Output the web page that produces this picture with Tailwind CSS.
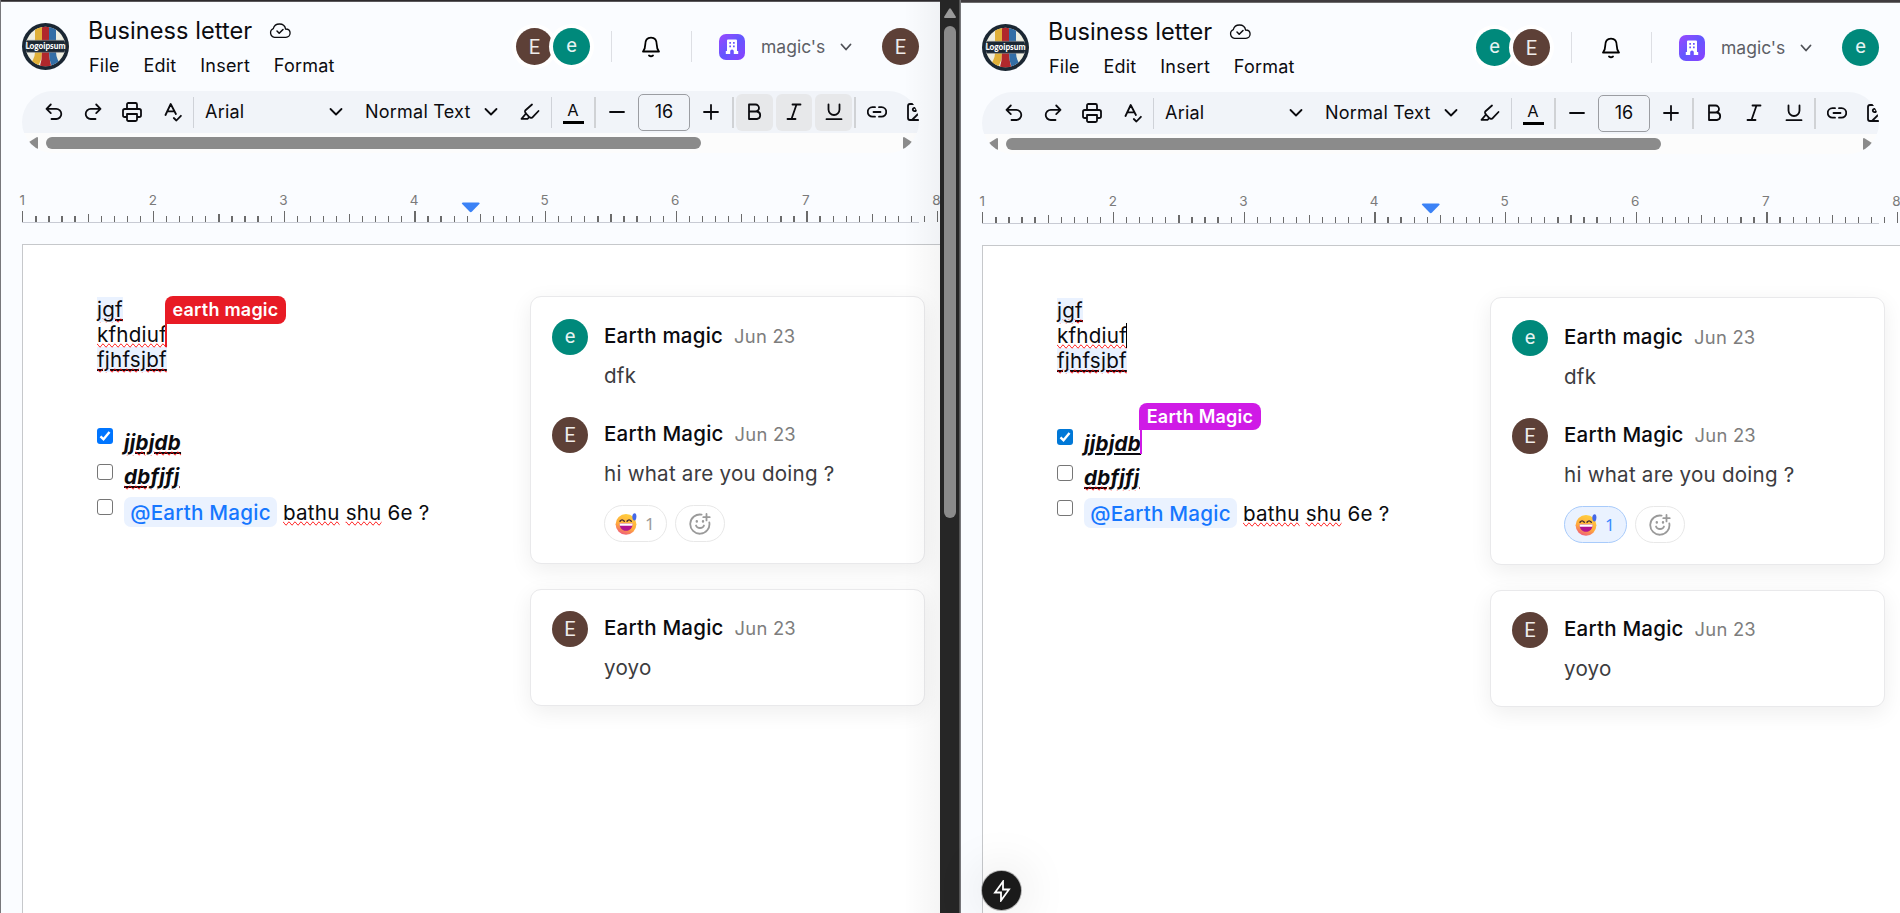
<!DOCTYPE html>
<html lang="en">
<head>
<meta charset="utf-8">
<title>Business letter</title>
<script src="https://cdn.jsdelivr.net/npm/@tailwindcss/browser@4"></script>
</head>
<body class="w-[1900px] h-[913px] overflow-hidden bg-[#fafcff] font-['Inter','Liberation_Sans',sans-serif] tracking-[0.014em] text-[#0b0b0f]">
<div id="app" class="relative flex h-[913px] w-[1900px]"></div>
<script>
const svg = (w, h, vb, inner, cls) => `<svg width="${w}" height="${h}" viewBox="${vb}" fill="none" stroke="currentColor" stroke-width="1.8" stroke-linecap="round" stroke-linejoin="round" class="shrink-0 ${cls || ''}">${inner}</svg>`;
const avatar = (c, cls) => `<div class="flex shrink-0 items-center justify-center rounded-full tracking-normal text-white ${c === 'e' ? 'bg-[#00897b]' : 'bg-[#5d4037]'} ${cls}"><span class="font-['Roboto'] text-[20px] leading-none opacity-90 ${c === 'e' ? '-mt-[3px]' : ''}">${c}</span></div>`;
const chevron = svg(14, 14, '0 0 14 14', '<path d="M1.5 4 7 9.5 12.5 4"/>');

const logo = `<svg width="47" height="47" viewBox="0 0 47 47" class="shrink-0 tracking-normal">
<defs><clipPath id="disc"><circle cx="23.5" cy="23.5" r="19.8"/></clipPath></defs>
<circle cx="23.5" cy="23.5" r="23.5" fill="#1b2733"/>
<g clip-path="url(#disc)"><rect width="47" height="47" fill="#efeee0"/>
<path fill="#e0b038" d="M13 0h7v18h-7zM13 29h7q0 9-5 15H5Q13 37 13 29z"/>
<path fill="#b0282c" d="M20 0h7v18h-7zM20 29h7q.5 9 3 17H17Q20 38 20 29z"/>
<path fill="#336ea6" d="M27 0h7v18h-7zM27 29h7q0 8 7 15H30Q27 37 27 29z"/>
<rect y="17.3" width="47" height="12" fill="#1b2733"/></g>
<path d="M4 17.3h39M4 29.3h39" stroke="#8f9294" stroke-width=".6"/>
<text x="3.4" y="26.200" textLength="40" lengthAdjust="spacingAndGlyphs" font-family="Lato" font-weight="900" font-size="8.4" fill="#fff">Logoipsum</text></svg>`;

const building = `<div class="flex size-[26px] items-center justify-center rounded-[7px] bg-linear-to-br from-[#9a45ff] via-[#6257ff] to-[#8b3dff]"><svg width="14" height="16" viewBox="0 0 14 16"><path fill="#fff" fill-rule="evenodd" d="M3 .5h8a1 1 0 0 1 1 1V12h1.2v3H8.8v-2.8a1.8 1.8 0 0 0-3.6 0V15H.8v-3H2V1.500a1 1 0 0 1 1-1zM4.300 3v1.700H6V3zM8 3v1.700h1.700V3zM4.300 6.500v1.700H6V6.500zM8 6.500v1.700h1.700V6.500z"/></svg></div>`;

const emoji = `<svg width="23" height="23" viewBox="0 0 23 23" class="shrink-0"><defs><linearGradient id="face" x1=".7" y1="0" x2=".3" y2="1"><stop offset="0" stop-color="#ffd13f"/><stop offset=".6" stop-color="#ffaa3c"/><stop offset="1" stop-color="#f0587c"/></linearGradient></defs>
<circle cx="11" cy="12.300" r="10.400" fill="url(#face)"/>
<path d="M5 9.200q2-2.600 4.300 0M12 9.200q2-2.600 4.300 0" fill="none" stroke="#402a32" stroke-width="1.400" stroke-linecap="round"/>
<path d="M4.500 11.500h13.200c0 4-2.500 7.300-6.600 7.300s-6.600-3.300-6.600-7.300z" fill="#b1148f"/><path d="M4.500 11.500h13.200l-.3 2.300H4.800z" fill="#fff"/>
<path d="M17.300 4.800c0-2 1-3.500 2.400-3.500 1.200 0 1.700 1.200 1.700 3.500s-.8 3.700-2 3.700-2.100-1.300-2.100-3.700z" fill="#4468e8"/></svg>`;

const addReaction = svg(22, 22, '0 0 22 22', '<path d="M12.600 1.700A9.600 9.600 0 1 0 20.300 9.400M17.500 1v6.400M14.300 4.200h6.400"/><path d="M7 12.500q.8 2.500 4 2.500t4-2.500"/><path d="M7.800 8.200v.4M14 8.200v.4" stroke-width="2.400"/>', 'text-[#9a9a9a]');

function ruler() {
  let s = '';
  for (let i = 0; i <= 70; i++) {
    const h = i % 10 === 0 ? 11 : i % 5 === 0 ? 8 : 6;
    s += `<rect x="${(21.2 + i * 13.07).toFixed(2)}" y="${25 - h}" width="1.25" height="${h}" fill="#6b6b6b"/>`;
  }
  for (let n = 0; n < 8; n++) s += `<text x="${(21.2 + n * 130.6).toFixed(1)}" y="7.800" text-anchor="middle" font-size="13.500" fill="#7a7a7a">${n + 1}</text>`;
  return `<svg width="939" height="37" viewBox="0 -10 939 37" class="block shrink-0 overflow-visible tracking-normal"><path d="M21 25h897v1H21z" fill="#c8cbd4"/><g shape-rendering="crispEdges">${s}</g><path d="M462 5.500h15.500q2 0 .8 1.500l-7.300 7.600q-1.200 1.200-2.500 0L461.200 7q-1.200-1.500.8-1.500z" fill="#3b82f6"/></svg>`;
}

const comment = (c, name, text, h) => `<div class="flex ${h}">
  ${avatar(c, 'size-[36px]')}
  <div class="ml-[16px] pt-[4px]">
    <div class="flex h-[26px] items-baseline whitespace-nowrap"><span class="text-[20.500px]/[26px] font-medium">${name}</span><span class="ml-[11px] text-[18.400px]/[26px] text-[#7d7d7d]">Jun 23</span></div>
    <div class="mt-[14px] text-[20.600px]/[26px] whitespace-nowrap text-[#3c3c40]">${text}</div>
  </div></div>`;

const checkbox = (on) => on
  ? `<svg width="16" height="16" viewBox="0 0 16 16" class="shrink-0"><rect width="16" height="16" rx="3" fill="${on}"/><path d="m3.500 8.300 3 3L12.500 4" fill="none" stroke="#fff" stroke-width="2.400"/></svg>`
  : `<div class="size-4 shrink-0 rounded-[3px] border border-[#767676] bg-white"></div>`;

const err = (t) => `<span class="[text-decoration-line:spelling-error]">${t}</span>`;
const flag = (name, cls, caret) => `<span class="absolute ${caret}"></span><span class="absolute flex items-center justify-center whitespace-nowrap rounded-[8px] rounded-bl-none text-[18px] leading-none font-semibold not-italic text-white ${cls}">${name}</span>`;

function pane(p) {
  const tb = p.left ? 'bg-[#e7e8ea]' : '';
  return `<section class="relative flex h-[913px] w-[940px] flex-col overflow-hidden border-l border-[#77777b]">
  <div class="${p.left ? 'h-[2px] bg-[#2d2a2d] border-b border-[#5a585b]' : 'h-[3px] bg-[#3f3b3e] border-b border-[#6d6b6d]'} shrink-0"></div>
  <header class="flex h-[89px] shrink-0 pl-[21px] pr-[21px]">
    <div class="pt-[21px]">${logo}</div>
    <div class="ml-[19px] flex flex-col pt-[14px]">
      <div class="flex h-[30px] items-center"><h1 class="w-[180px] whitespace-nowrap text-[23.600px] leading-none tracking-[0.002em]">Business letter</h1>
      ${svg(22, 16, '0 0 22 16', '<path stroke-width="1.300" d="M5.500 14.300A4.500 4.500 0 0 1 4.300 5.700C5 2.700 7.500 1 10.500 1s5.500 2 6.100 5c2.700 0 4.500 1.800 4.500 4.100s-1.800 4.200-4.200 4.200z"/><path stroke-width="1.500" d="m8 8 2.200 2.200L14 6.500"/>', 'ml-px')}</div>
      <nav class="ml-px mt-[7px] flex h-[26px] items-center gap-[23.750px] whitespace-nowrap text-[18px] leading-none"><span>File</span><span>Edit</span><span>Insert</span><span>Format</span></nav>
    </div>
    <div class="ml-auto flex h-[89px] items-center">
      ${avatar(p.a[0], 'size-[37px] ring-4 ring-white')}${avatar(p.a[1], 'z-10 size-[37px] ring-4 ring-white')}
      <div class="ml-[21px] h-[31px] w-px bg-[#dddfe4]"></div>
      ${svg(20, 22, '0 0 20 22', '<path d="M2 15.500h16c-1.800-2-2.200-3.500-2.200-6.500 0-4.300-2-7.300-5.800-7.300S4.200 4.700 4.200 9c0 3-.4 4.500-2.200 6.500zM8 19.500q2 1.500 4 0"/>', 'ml-[29px] text-black')}
      <div class="ml-[30px] mr-[27px] h-[31px] w-px bg-[#dddfe4]"></div>
      ${building}
      <span class="ml-[16px] w-[64px] whitespace-nowrap text-[17.500px] leading-none tracking-normal text-[#5d5f66]">magic's</span>
      <span class="ml-[14px] mr-[29px] text-[#4f5157]">${svg(14, 14, '0 0 14 14', '<path d="M2.500 4.500 7 9.500l4.500-5"/>')}</span>
      ${avatar(p.a[0], 'size-[37px]')}
    </div>
  </header>
  <div class="ml-[21px] flex h-[62px] w-[897px] shrink-0 flex-col overflow-hidden rounded-[31px]">
    <div class="flex h-[42px] shrink-0 items-center bg-[#f1f4f9] pl-[12px] text-[18px] leading-none *:shrink-0">
      <div class="flex w-[39px] justify-center">${svg(18, 18, '0 0 18 18', '<path d="M5.800 1.500 1.500 5.800l4.300 4.300M1.500 5.800h9.700a5 5 0 0 1 0 10.200H6.500"/>')}</div>
      <div class="flex w-[39px] justify-center">${svg(18, 18, '0 0 18 18', '<path d="m12.200 1.500 4.300 4.300-4.300 4.300M16.500 5.800H6.800a5 5 0 0 0 0 10.200h4.700"/>')}</div>
      <div class="flex w-[40px] justify-center">${svg(20, 20, '0 0 20 20', '<path d="M5 6.800V2.500q0-1.500 1.500-1.500h7Q15 1 15 2.500v4.300M5 15H2.800Q1 15 1 13.200V8.800Q1 7 2.800 7h14.400Q19 7 19 8.800v4.400q0 1.800-1.800 1.800H15M5 12h10v5.500q0 1.500-1.500 1.500h-7Q5 19 5 17.500z"/>')}</div>
      <div class="flex w-[41px] justify-center">${svg(18, 20, '0 0 18 20', '<path d="M1.500 13 6.700 2l5.200 10M3.300 9.300h7M9.800 16l2.600 2.500 4.500-4.700"/>')}</div>
      <div class="h-[31px] w-px bg-[#cfd2d8]"></div>
      <div class="flex w-[156px] items-center justify-between pl-[11px] pr-[7px]"><span>Arial</span>${chevron}</div>
      <div class="flex w-[148px] items-center justify-between whitespace-nowrap pl-[15px]"><span>Normal Text</span>${chevron}</div>
      <div class="ml-[11px] flex w-[42px] justify-center">${svg(20, 18, '0 0 20 18', '<path d="M12 1.500 5.500 7.200c-.7.7-.7 1.300-.3 2L6 10.500l-4.500 5.300h6l1.800-1.600 1.600.6c.8.200 1.300 0 1.800-.6L18.500 8M6 10.500l3.300 3.700"/>')}</div>
      <div class="h-[31px] w-px bg-[#cfd2d8]"></div>
      <div class="flex w-[42px] flex-col items-center tracking-normal"><span class="mt-[-1px] text-[16.500px] leading-[22px]">A</span><span class="h-[3px] w-[21px] bg-black"></span></div>
      <div class="h-[31px] w-[2px] bg-[#d0d2d5]"></div>
      <div class="flex w-[42px] justify-center">${svg(16, 16, '0 0 16 16', '<path d="M1 8h14"/>')}</div>
      <div class="flex h-[37px] w-[52px] items-center justify-center rounded-[5px] border border-[#9b9da2] tracking-normal">16</div>
      <div class="flex w-[42px] justify-center">${svg(16, 16, '0 0 16 16', '<path d="M1 8h14M8 1v14"/>')}</div>
      <div class="h-[31px] w-[2px] bg-[#d0d2d5]"></div>
      <div class="ml-[2px] flex h-[37px] w-[37px] items-center justify-center rounded-[6px] ${tb}">${svg(16, 18, '0 0 16 18', '<path d="M2 1.500h6.500a3.500 3.500 0 0 1 0 7H2zM2 8.500h8a3.800 3.800 0 0 1 0 7.500H2z"/>')}</div>
      <div class="ml-[3px] flex h-[37px] w-[36px] items-center justify-center rounded-[6px] ${tb}">${svg(16, 18, '0 0 16 18', '<path d="M6.500 1.500h8M1.500 16h8M10.500 1.500 5.500 16"/>')}</div>
      <div class="ml-[3px] flex h-[37px] w-[37px] items-center justify-center rounded-[6px] ${tb}">${svg(18, 18, '0 0 18 18', '<path d="M3.500 1.500v5a5.500 5.500 0 0 0 11 0v-5M1.500 16.200h15"/>')}</div>
      <div class="ml-[2px] h-[31px] w-[2px] bg-[#d0d2d5]"></div>
      <div class="flex w-[42px] justify-center">${svg(20, 12, '0 0 20 12', '<path d="M8 1.200H5.500a4.700 4.700 0 0 0 0 9.500H8M12 1.200h2.500a4.700 4.700 0 0 1 0 9.500H12M6.500 6h7"/>')}</div>
      <div class="flex w-[42px] justify-center">${svg(24, 18, '0 0 24 18', '<path d="M7 1H3q-2 0-2 2v12q0 2 2 2h18"/><circle cx="7.500" cy="6.500" r="1.700"/><path d="m5 17 8-8"/>')}</div>
    </div>
    <div class="flex h-[20px] shrink-0 items-center bg-[#fcfcfc] text-[#8b8b8b]">
      <svg width="10" height="12" viewBox="0 0 10 12" class="ml-[6px]"><path fill="currentColor" d="M9 0q1 0 1 1v10q0 1-1 1L1 7Q-.3 6 1 5z"/></svg>
      <div class="ml-[8px] h-[12px] w-[655px] rounded-full bg-[#8b8b8b]"></div>
      <svg width="10" height="12" viewBox="0 0 10 12" class="ml-auto mr-[6px]"><path fill="currentColor" d="M1 0Q0 0 0 1v10q0 1 1 1l8-5q1.300-1 0-2z"/></svg>
    </div>
  </div>
  <div class="mt-[34px] flex">${ruler()}</div>
  <main class="ml-[21px] mt-[20px] flex flex-1 border-l border-t border-[#c6c8cb] bg-white">
    <div class="w-[507px] shrink-0 pl-[74px] pt-[52px] text-[20.600px]/[25px]">
      <p><span class="bg-[#eaf2ff] underline">${err('jgf')}</span></p>
      <p><span class="relative">${err('kfhdiuf')}${p.left ? flag('earth magic', 'left-[68px] top-[-26px] h-[28px] w-[121px] bg-[#e81b25]', 'left-[68px] top-0 h-[25px] w-[2px] bg-[#e81b25]') : '<span class="absolute left-[69px] top-0 h-[25px] w-px bg-black"></span>'}</span></p>
      <p><span class="bg-[#eaf2ff] underline">${err('fjhfsjbf')}</span></p>
      <div class="mt-[56px] flex h-[35px]"><span class="flex">${checkbox(p.blue)}</span><span class="relative ml-[11px] mt-[2px] h-[25px] font-bold italic"><span class="underline">${p.left ? err('jjbjdb') : 'jjbjdb'}</span>${p.left ? '' : flag('Earth Magic', 'left-[55px] top-[-28px] h-[27px] w-[122px] bg-[#cf1be6]', 'left-[56px] top-[-2px] h-[25px] w-[2px] bg-[#cf1be6]')}</span></div>
      <div class="flex h-[35px]"><span class="flex pt-[1px]">${checkbox()}</span><span class="ml-[11px] mt-[1px] font-bold italic underline">${err('dbfjfj')}</span></div>
      <div class="flex h-[35px] whitespace-nowrap"><span class="flex pt-[1px]">${checkbox()}</span><span class="ml-[11px] -mt-px flex h-[30px] w-[153px] items-center justify-center rounded-[7px] bg-[#eaf2ff] font-medium text-[#1677ff]">@Earth Magic</span><span class="ml-[6px] mt-[2px]">${err('bathu')} ${err('shu')} 6e ?</span></div>
    </div>
    <div class="flex flex-col pt-[51px]">
      <div class="h-[268px] w-[395px] shrink-0 rounded-[11px] border border-[#e9e9eb] bg-white pl-[21px] pt-[22px] shadow-[0_6px_22px_rgba(0,0,0,0.07)]">
        ${comment('e', 'Earth magic', 'dfk', 'h-[98px]')}
        ${comment('E', 'Earth Magic', 'hi what are you doing ?', 'h-[88px]')}
        <div class="ml-[52px] flex h-[37px] gap-[8px]">
          <div class="flex w-[63px] items-center rounded-full border pl-[10px] text-[17px] leading-none ${p.left ? 'border-[#e8e8e8] text-[#9a9a9a]' : 'border-[#a8cbfb] bg-[#eaf2ff] text-[#3b8bff]'}">${emoji}<span class="ml-[7px] -mt-px font-['Noto_Sans']">1</span></div>
          <div class="flex w-[50px] items-center justify-center rounded-full border border-[#e8e8e8]">${addReaction}</div>
        </div>
      </div>
      <div class="mt-[25px] h-[117px] w-[395px] shrink-0 rounded-[11px] border border-[#e9e9eb] bg-white pl-[21px] pt-[21px] shadow-[0_6px_22px_rgba(0,0,0,0.07)]">
        ${comment('E', 'Earth Magic', 'yoyo', 'h-[88px]')}
      </div>
    </div>
  </main>
  ${p.left ? '<div class="absolute bottom-0 right-0 top-[2px] w-[36px] bg-linear-to-r from-black/0 to-black/4"></div>' : ''}
</section>`;
}

const scrollbar = `<div class="flex h-[913px] w-[20px] shrink-0 flex-col items-center border-r border-[#555] bg-[#262626]">
  <svg width="12" height="10" viewBox="0 0 12 10" class="mt-[8px] shrink-0"><path fill="#9a9a9a" d="M0 9q0 1 1 1h10q1 0 1-1L7 1Q6-.3 5 1z"/></svg>
  <div class="mt-[8px] h-[492px] w-[12px] shrink-0 rounded-full bg-[#8b8b8b]"></div></div>`;

// The first collaborator in each pane is the signed-in user.
document.getElementById('app').innerHTML =
  pane({ left: true, a: ['E', 'e'], blue: '#0075ff' }) + scrollbar +
  pane({ left: false, a: ['e', 'E'], blue: '#0078d7' }) +
  `<div class="absolute left-[982px] top-[871px] flex size-[39px] items-center justify-center rounded-full bg-[#1a1a1a] text-white shadow-[0_0_50px_rgba(0,0,0,0.15),0_0_0_1px_rgba(90,90,90,0.4)]">${svg(18, 22, '0 0 18 22', '<path stroke-linejoin="miter" d="M10 1.500 2 12.500h6V20.500l8-11h-6z"/>')}</div>`;
</script>
</body>
</html>
